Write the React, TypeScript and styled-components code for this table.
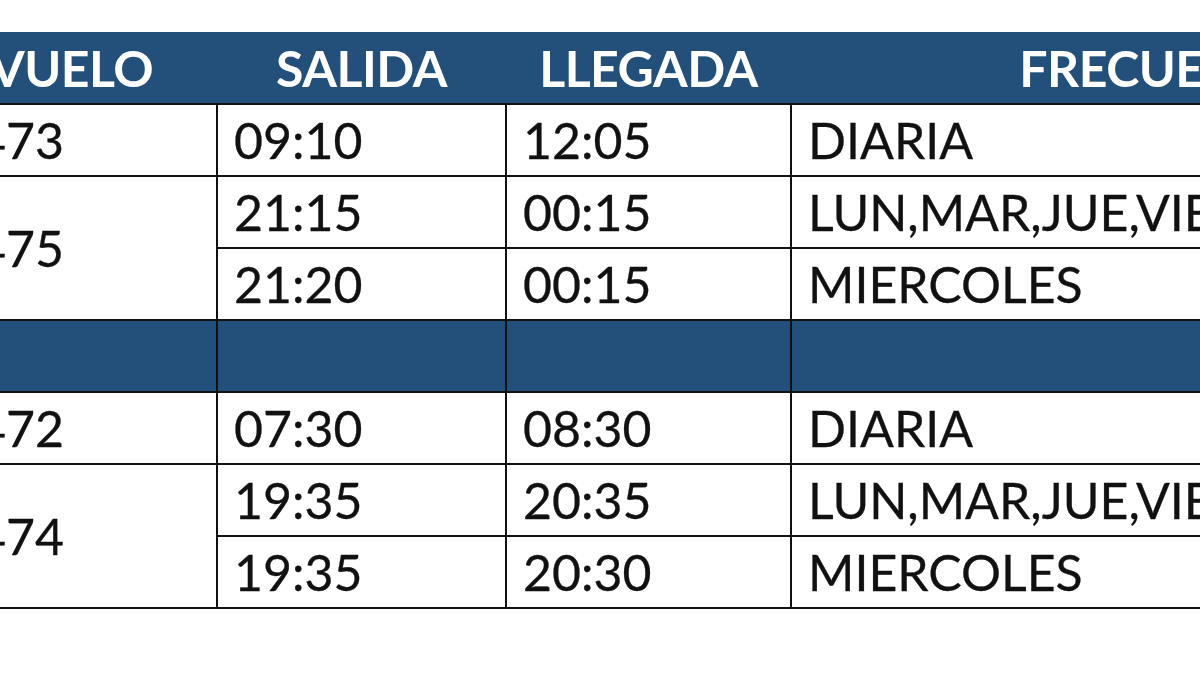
import React from 'react';
import styled, { createGlobalStyle } from 'styled-components';

const Global = createGlobalStyle`
  html, body {
    margin: 0;
    padding: 0;
    background: #fff;
    overflow: hidden;
  }
  body {
    width: 1200px;
    height: 675px;
    font-family: Lato, "Open Sans", sans-serif;
  }
`;

const Page = styled.div`
  width: 1200px;
  height: 675px;
  overflow: hidden;
  padding-top: 32px;
  box-sizing: border-box;
`;

const Table = styled.table`
  margin-left: -143px;
  border-collapse: collapse;
  table-layout: fixed;
  width: 1693px;
  font-size: 50px;
  color: #111;
`;

const HeadCell = styled.th`
  background: #23507a;
  color: #fff;
  font-weight: 700;
  text-align: center;
  height: 71px;
  padding: 0;
  border-bottom: 2px solid #111;
  letter-spacing: -0.5px;
`;

const Row = styled.tr<{ $band?: boolean }>`
  height: 72px;
  background: ${p => (p.$band ? '#23507a' : '#fff')};
`;

const Cell = styled.td<{ $pad?: number }>`
  border: 2px solid #111;
  padding: 0 0 0 ${p => p.$pad ?? 16}px;
  text-align: left;
  vertical-align: middle;
  white-space: nowrap;
  overflow: hidden;
  line-height: 1;
  -webkit-text-stroke: 0.3px #111;
`;

type Leg = { salida: string; llegada: string; frec: string };
type Flight = { vuelo: string; legs: Leg[] };

const ida: Flight[] = [
  { vuelo: '4473', legs: [{ salida: '09:10', llegada: '12:05', frec: 'DIARIA' }] },
  {
    vuelo: '4475',
    legs: [
      { salida: '21:15', llegada: '00:15', frec: 'LUN,MAR,JUE,VIE,SAB,DOM' },
      { salida: '21:20', llegada: '00:15', frec: 'MIERCOLES' },
    ],
  },
];

const vuelta: Flight[] = [
  { vuelo: '4472', legs: [{ salida: '07:30', llegada: '08:30', frec: 'DIARIA' }] },
  {
    vuelo: '4474',
    legs: [
      { salida: '19:35', llegada: '20:35', frec: 'LUN,MAR,JUE,VIE,SAB,DOM' },
      { salida: '19:35', llegada: '20:30', frec: 'MIERCOLES' },
    ],
  },
];

const FlightRows = ({ flights }: { flights: Flight[] }) => (
  <>
    {flights.map(f =>
      f.legs.map((leg, i) => (
        <Row key={f.vuelo + i}>
          {i === 0 && (
            <Cell rowSpan={f.legs.length} $pad={89}>
              {f.vuelo}
            </Cell>
          )}
          <Cell>{leg.salida}</Cell>
          <Cell>{leg.llegada}</Cell>
          <Cell>{leg.frec}</Cell>
        </Row>
      ))
    )}
  </>
);

export default function App() {
  return (
    <Page>
      <Global />
      <Table>
        <colgroup>
          <col style={{ width: 359 }} />
          <col style={{ width: 289 }} />
          <col style={{ width: 285 }} />
          <col style={{ width: 760 }} />
        </colgroup>
        <thead>
          <tr>
            <HeadCell>N° VUELO</HeadCell>
            <HeadCell>SALIDA</HeadCell>
            <HeadCell>LLEGADA</HeadCell>
            <HeadCell>FRECUENCIA</HeadCell>
          </tr>
        </thead>
        <tbody>
          <FlightRows flights={ida} />
          <Row $band>
            <Cell />
            <Cell />
            <Cell />
            <Cell />
          </Row>
          <FlightRows flights={vuelta} />
        </tbody>
      </Table>
    </Page>
  );
}
